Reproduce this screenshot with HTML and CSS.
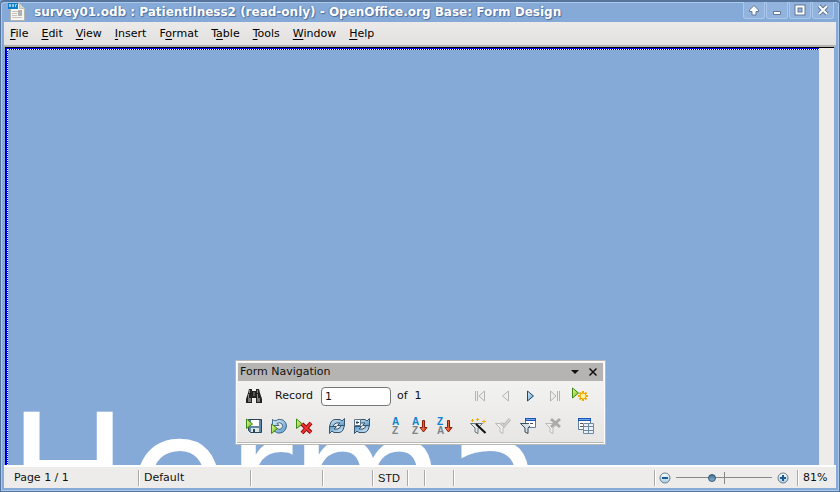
FILE: index.html
```html
<!DOCTYPE html>
<html lang="en">
<head>
<meta charset="utf-8">
<title>survey01.odb : PatientIlness2 (read-only) - OpenOffice.org Base: Form Design</title>
<link rel="stylesheet" href="styles.css">
</head>
<body>
<svg class="defs" aria-hidden="true">
  <defs>
    <linearGradient id="blue" x1="0" y1="0" x2="1" y2="1"><stop offset="0" stop-color="#e6f2fb"/><stop offset="1" stop-color="#5296c8"/></linearGradient>
    <linearGradient id="green" x1="0" y1="0" x2="1" y2="1"><stop offset="0" stop-color="#ecfaa8"/><stop offset="1" stop-color="#62b80c"/></linearGradient>
    <linearGradient id="red" x1="0" y1="0" x2="1" y2="0"><stop offset="0" stop-color="#f9a070"/><stop offset="1" stop-color="#cc2400"/></linearGradient>
    <linearGradient id="ball" x1="0" y1="0" x2="0" y2="1"><stop offset="0" stop-color="#ffffff"/><stop offset="1" stop-color="#a4cdea"/></linearGradient>
    <g id="play"><path d="M.5 1v9.500L6.500 6z" fill="url(#green)" stroke="#3c8a12"/></g>
    <g id="arrow"><path d="M10.500 2.500h2v7h2.500L11.500 14 8 9.500h2.500z" fill="url(#red)" stroke="#8e1d08"/></g>
    <g id="funnel"><path d="M.5 5.500h12L8 10v5.500l-3-1.500v-4z"/></g>
    <path id="turn" d="M.5 8.500L2 4Q3.500 1.500 6 1.500H11L13 3 15.500.5V7.500H8.500L11 5H7.500Q5 5.500 4 8.500z"/>
    <g id="sync" fill="url(#blue)" stroke="#36546e"><use href="#turn"/><use href="#turn" transform="rotate(180 8 8)"/></g>
  </defs>
</svg>
<div class="window">
  <header class="titlebar">
    <svg class="app-icon" viewBox="0 0 18 18">
      <path d="M2.500.5h9l5 5v12h-14z" fill="#f4f4f2" stroke="#b4b4b0"/><path d="M11.500.5v5h5z" fill="#d8d8d4" stroke="#c4c4c0"/>
      <path d="M4 8.500h6M4 10.500h5M4 12.500h5M4 14.500h10" stroke="#c4c4c0"/><path d="M10 7h4v6h-4z" fill="#b2b2ae"/>
      <path d="M0 0h10v6H0z" fill="#0d7fc8"/><path d="M1.500 1.500h1v2h-1zM4.500 1.500h1v2h-1zM7.500 4V1.500H9" fill="none" stroke="#a8d4f0"/>
    </svg>
    <h1>survey01.odb : PatientIlness2 (read-only) - OpenOffice.org Base: Form Design</h1>
    <div class="window-buttons">
      <button aria-label="Shade"><svg viewBox="0 0 12 12"><path d="M6 1.500L1.500 6v1.500H4v3.500h4V7.500h2.500V6z" fill="#fff" stroke="#5f7797"/></svg></button>
      <button aria-label="Minimize"><svg viewBox="0 0 12 12"><path d="M2.500 7.500h7v3h-7z" fill="#fff" stroke="#5f7797"/></svg></button>
      <button aria-label="Maximize"><svg viewBox="0 0 12 12"><path d="M2.500 2.500h7v7h-7z" fill="none" stroke="#5f7797" stroke-width="4"/><path d="M2.500 2.500h7v7h-7z" fill="none" stroke="#fff" stroke-width="2"/></svg></button>
      <button aria-label="Close"><svg viewBox="0 0 12 12"><path d="M2 2l8 8M10 2l-8 8" stroke="#5f7797" stroke-width="4"/><path d="M2 2l8 8M10 2l-8 8" stroke="#fff" stroke-width="2"/></svg></button>
    </div>
  </header>
  <nav class="menubar">
    <a href="#"><u>F</u>ile</a><a href="#"><u>E</u>dit</a><a href="#"><u>V</u>iew</a><a href="#"><u>I</u>nsert</a><a href="#">F<u>o</u>rmat</a><a href="#">T<u>a</u>ble</a><a href="#"><u>T</u>ools</a><a href="#"><u>W</u>indow</a><a href="#"><u>H</u>elp</a>
  </nav>
  <main class="workspace">
    <div class="page"><div class="sheet"><p>Herma</p></div></div>
    <div class="gutter"></div>
  </main>
  <footer class="statusbar">
    <span class="cell page-no">Page 1 / 1</span>
    <span class="cell style-name">Default</span>
    <span class="cell wide"></span>
    <span class="cell mid"></span>
    <span class="cell mode">STD</span>
    <span class="cell tiny"></span>
    <span class="cell small"></span>
    <span class="cell rest"></span>
    <div class="cell zoom">
      <button aria-label="Zoom out"><svg viewBox="0 0 12 12"><circle cx="6" cy="6" r="5" fill="url(#ball)" stroke="#6c7c88"/><path d="M3 6h6" stroke="#1b5a92" stroke-width="2"/></svg></button>
      <input type="range" min="0" max="100" value="36" aria-label="Zoom">
      <button aria-label="Zoom in"><svg viewBox="0 0 12 12"><circle cx="6" cy="6" r="5" fill="url(#ball)" stroke="#6c7c88"/><path d="M3 6h6M6 3v6" stroke="#1b5a92" stroke-width="2"/></svg></button>
    </div>
    <span class="percent">81%</span>
  </footer>
</div>

<section class="toolbar" aria-label="Form Navigation">
  <header class="toolbar-title">
    <h2>Form Navigation</h2>
    <button aria-label="Toolbar options"><svg viewBox="0 0 10 10"><path d="M1 3h8L5 7z" fill="#111"/></svg></button>
    <button aria-label="Close toolbar"><svg viewBox="0 0 10 10"><path d="M1.500 1.500l7 7M8.500 1.500l-7 7" stroke="#111" stroke-width="1.500"/></svg></button>
  </header>
  <div class="row">
    <button class="tool" aria-label="Find record"><svg viewBox="0 0 16 16"><path d="M3 1h3v2h4V1h3l1 4 2 6v4h-6v-5H6v5H0v-4l2-6z" fill="#222"/><path d="M3.500 2v3M11.500 2v3M2.500 6v5M11.500 6v5" stroke="#888"/><path d="M2 10h3v4H2zM11 10h3v4h-3z" fill="#777"/><path d="M7 4h2v4H7z" fill="#555"/></svg></button>
    <label for="record">Record</label>
    <input id="record" type="text" value="1">
    <span class="total">of&nbsp; 1</span>
    <button class="tool first" aria-label="First record"><svg viewBox="0 0 16 16" fill="#eee" stroke="#b4b4b4"><path d="M3.500 3v10M12.500 3v10L7 8zM5.500 3v10"/></svg></button>
    <button class="tool" aria-label="Previous record"><svg viewBox="0 0 16 16" fill="#eee" stroke="#b4b4b4"><path d="M11.500 3v10L5.500 8z"/></svg></button>
    <button class="tool" aria-label="Next record"><svg viewBox="0 0 16 16"><path d="M5.500 3v10l6-5z" fill="url(#blue)" stroke="#20486c"/></svg></button>
    <button class="tool" aria-label="Last record"><svg viewBox="0 0 16 16" fill="#eee" stroke="#b4b4b4"><path d="M12.500 3v10M3.500 3v10L9 8zM10.500 3v10"/></svg></button>
    <button class="tool" aria-label="New record"><svg viewBox="0 0 16 16"><path d="M.5 0v10l6-5z" fill="url(#green)" stroke="#3c8a12"/><path d="M11 3v10M6 8h10M7.500 4.500l7 7M14.500 4.500l-7 7" stroke="#efaa00" stroke-width="2"/><circle cx="11" cy="8" r="3" fill="#fff2a0" stroke="#e8a400"/></svg></button>
  </div>
  <div class="row">
    <button class="tool" aria-label="Save record"><svg viewBox="0 0 16 16"><path d="M2.500 1.500h13v13h-11l-2-2z" fill="#5e88a5" stroke="#26455c"/><path d="M5 2h8v6H5z" fill="#fff"/><path d="M5 10h8v4H5z" fill="#dce4e8"/><path d="M7 11h2v3H7z" fill="#26455c"/><use href="#play"/></svg></button>
    <button class="tool" aria-label="Undo data entry"><svg viewBox="0 0 16 16"><path d="M1.500 1.500v6h6.500L6 5.500Q9 3.500 11 6t-1 5q-2 1-4-.5L3 13q4 3.500 8.500 1.500 4-2.500 4-6.500T12 2Q8 0 4 3z" fill="url(#blue)" stroke="#426a8a"/><path d="M.5 6v9.500l6-5z" fill="url(#green)" stroke="#3c8a12"/></svg></button>
    <button class="tool" aria-label="Delete record"><svg viewBox="0 0 16 16"><use href="#play"/><path d="M6 6l9 8.500M15 5l-9 10" stroke="#8e0505" stroke-width="4"/><path d="M6 6l9 8.500M15 5l-9 10" stroke="#ef3330" stroke-width="2"/></svg></button>
    <i class="sep"></i>
    <button class="tool" aria-label="Refresh"><svg viewBox="0 0 16 16"><use href="#sync"/></svg></button>
    <button class="tool" aria-label="Refresh control"><svg viewBox="0 0 16 16"><use href="#sync"/><path d="M.5 1.500h6v6h-6z" fill="#f4f8fb" stroke="#5d7488"/><path d="M3 3v3M2 4.500h3" stroke="#24435c"/></svg></button>
    <i class="sep"></i>
    <button class="tool" aria-label="Sort"><svg viewBox="0 0 16 16"><text class="glyph a" x="5" y="7">A</text><text class="glyph z" x="5" y="16">Z</text></svg></button>
    <button class="tool" aria-label="Sort ascending"><svg viewBox="0 0 16 16"><text class="glyph a" x="0" y="7">A</text><text class="glyph z" x="0" y="16">Z</text><use href="#arrow"/></svg></button>
    <button class="tool" aria-label="Sort descending"><svg viewBox="0 0 16 16"><text class="glyph a" x="0" y="7">Z</text><text class="glyph z" x="0" y="16">A</text><use href="#arrow"/></svg></button>
    <i class="sep"></i>
    <button class="tool" aria-label="AutoFilter"><svg viewBox="0 0 16 16"><use href="#funnel" fill="#e2e7ea" stroke="#66747e"/><path d="M6 6l9.500 9" stroke="#111" stroke-width="2"/><path d="M1 2.500h3M2.500 1v3M6 1.500h3M7.500 0v3M12 3.500h4M14 1.500v4" stroke="#f0ad14"/></svg></button>
    <button class="tool" aria-label="Apply filter"><svg viewBox="0 0 16 16"><use href="#funnel" fill="#eee" stroke="#bbb"/><path d="M6 5l3 3 6-7" fill="none" stroke="#bbb" stroke-width="3"/><path d="M6 5l3 3 6-7" fill="none" stroke="#ddd"/></svg></button>
    <button class="tool" aria-label="Form-based filters"><svg viewBox="0 0 16 16"><path d="M5.500.5h10v9h-10z" fill="#fff" stroke="#5d7da5"/><path d="M5 0h11v3H5z" fill="#1c56b4"/><path d="M6 1.500h9" stroke="#6da6ee"/><use href="#funnel" fill="#d5e0e6" stroke="#354c5a"/><path d="M6.500 4h8v4h-4z" fill="#fff"/><path d="M7 5.500h2M10 5.500h3" stroke="#555"/></svg></button>
    <button class="tool" aria-label="Remove filter"><svg viewBox="0 0 16 16"><use href="#funnel" fill="#eee" stroke="#bbb"/><path d="M6 1l9 8M15 1L6 9" stroke="#aaa" stroke-width="3"/></svg></button>
    <i class="sep"></i>
    <button class="tool" aria-label="Data source as table"><svg viewBox="0 0 16 16"><path d="M.5.500h12v11H.5z" fill="#fff" stroke="#5d7da5"/><path d="M0 0h13v3H0z" fill="#1c56b4"/><path d="M1 1.500h11" stroke="#6da6ee"/><path d="M2 5.500h3M2 8.500h3" stroke="#555"/><path d="M5.500 5.500h10v10h-10zM5.500 8.500h10M5.500 12.500h10M10.500 5.500v10" fill="#e8f2fa" stroke="#7089a0"/></svg></button>
  </div>
</section>
</body>
</html>
```
FILE: styles.css
```css
* { box-sizing: border-box; }
html, body { height: 100%; }
body { margin: 0; overflow: hidden; background: #86aad8; color: #111; font: 11px/14px "DejaVu Sans", sans-serif; }
button { margin: 0; padding: 0; border: 0; background: none; display: flex; align-items: center; justify-content: center; }
svg { display: block; }
.defs { position: absolute; width: 0; height: 0; }
h1, h2, p { margin: 0; font-weight: normal; }

.window { min-height: 100vh; display: flex; flex-direction: column; padding: 0 3px 3px; background: #86aad8; border: 1px solid #56749c; border-top: 2px solid #56749c; border-radius: 4px 4px 0 0; box-shadow: inset 1px 1px #a9c8ec, inset -1px -1px #a9c8ec; }

.titlebar { display: flex; align-items: center; height: 20px; padding-left: 4px; }
.app-icon { width: 18px; height: 18px; margin-right: 8px; }
.titlebar h1 { flex: 1; color: #fff; font-size: 12px; font-weight: bold; line-height: 20px; white-space: nowrap; text-shadow: 1px 1px 1px #4c6c9c, -1px 0 1px #5f81b2; }
.window-buttons { display: flex; align-self: flex-start; gap: 1px; margin-right: 2px; }
.window-buttons button { width: 22px; height: 17px; background: #92b3de; border: 1px solid #a9c8ec; border-top: 0; border-radius: 0 0 3px 3px; }
.window-buttons svg { width: 12px; height: 12px; }

.menubar { display: flex; gap: 13px; height: 25px; padding: 5px 6px; background: linear-gradient(#ecebea, #e2e0de); border-bottom: 2px solid #b4b2af; }
.menubar a { color: #000; text-decoration: none; }
.menubar u { text-underline-offset: 2px; }

.workspace { flex: 1; display: flex; min-height: 0; height: 0; margin: 0 2px 0 1px; border-left: 1px solid #000; border-top: 1px solid #000; background: #ecebea; }
.page { flex: 1; min-width: 0; display: flex; border: 1px solid #00f; border-width: 1px 0 0 1px; background: #00008c; }
.sheet { flex: 1; min-width: 0; overflow: hidden; display: flex; align-items: flex-end; border: 1px dotted #fff; border-width: 1px 0 0 1px; background: #86aad8 padding-box; }
.sheet p { color: #fff; font-size: 160px; line-height: 160px; margin-bottom: -89px; }
.gutter { width: 15px; background: #edecea; }

.statusbar { display: flex; align-items: center; height: 23px; line-height: 16px; background: #edecea; border-top: 2px solid #fff; }
.cell { height: 16px; border-right: 1px solid #aaa; box-shadow: 1px 0 #fff; flex: none; }
.page-no { width: 135px; padding-left: 10px; }
.style-name { width: 112px; padding-left: 5px; }
.wide { width: 72px; }
.mid { width: 50px; }
.mode { width: 35px; padding-left: 5px; font-family: "Liberation Sans", sans-serif; }
.tiny { width: 17px; }
.small { width: 29px; }
.rest { flex: 1; }
.zoom { width: 143px; display: flex; align-items: center; gap: 5px; padding: 0 8px 0 4px; }
.zoom svg { width: 12px; height: 12px; }
.zoom input { flex: 1; min-width: 0; margin: 0; height: 12px; appearance: none; background: linear-gradient(#888, #888) 50% 0 / 1px 12px no-repeat, linear-gradient(#888, #888) 0 5px / 100% 1px no-repeat; }
.zoom input::-webkit-slider-thumb { appearance: none; width: 8px; height: 8px; border-radius: 50%; border: 1px solid #31536d; background: linear-gradient(#426e90, #82b4d6); }
.percent { width: 38px; padding-left: 5px; }

.toolbar { position: absolute; left: 235px; bottom: 47px; width: 371px; padding: 2px 2px 3px; background: linear-gradient(#f6f6f5, #e7e6e4); border: 1px solid #bab8b5; box-shadow: inset 0 0 0 1px #fff, inset 0 -2px #bab8b5; }
.toolbar-title { display: flex; align-items: center; height: 18px; padding: 0 1px 0 2px; background: #b5b4b2; }
.toolbar-title h2 { flex: 1; font-size: 11px; }
.toolbar-title button { width: 18px; }
.toolbar-title svg { width: 10px; height: 10px; }
.row { display: flex; align-items: center; height: 30px; padding-left: 3px; }
.tool { width: 25px; height: 25px; flex: none; }
.tool svg { width: 16px; height: 16px; }
.row label { margin: 0 8px 0 9px; }
.row input { width: 70px; height: 19px; padding: 0 3px; border: 1px solid #777; border-radius: 4px; background: #fff; color: #111; font: inherit; }
.total { margin-left: 6px; }
.first { margin-left: auto; }
.row .tool:last-child { margin-right: 11px; }
.sep { width: 1px; height: 15px; margin: 0 4px; background: #cfcecc; }
.tool svg { overflow: visible; }
.glyph { font: bold 10px "Liberation Sans", sans-serif; }
.a { fill: #0b82d0; }
.z { fill: #78848c; }
```
